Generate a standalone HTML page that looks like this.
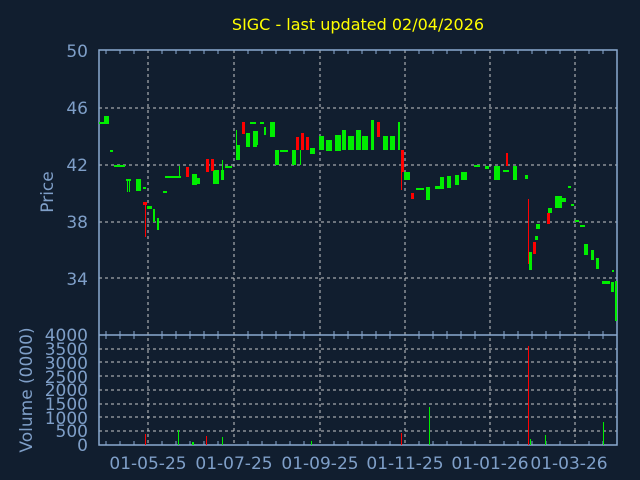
<!DOCTYPE html>
<html><head><meta charset="utf-8"><style>
html,body{margin:0;padding:0;background:#111e2f;width:640px;height:480px;overflow:hidden}
svg{display:block}
text{font-family:"DejaVu Sans","Liberation Sans",sans-serif}
</style></head><body>
<svg width="640" height="480" xmlns="http://www.w3.org/2000/svg">
<rect width="640" height="480" fill="#111e2f"/>
<text x="358" y="30" fill="#ffff00" font-size="16" text-anchor="middle">SIGC - last updated 02/04/2026</text>
<g stroke="#c8c8c8" stroke-width="1" stroke-dasharray="3,3">
<line x1="99" y1="108" x2="617" y2="108"/><line x1="99" y1="165" x2="617" y2="165"/>
<line x1="99" y1="222" x2="617" y2="222"/><line x1="99" y1="278" x2="617" y2="278"/>
<line x1="148" y1="50" x2="148" y2="445"/><line x1="234" y1="50" x2="234" y2="445"/>
<line x1="320" y1="50" x2="320" y2="445"/><line x1="405" y1="50" x2="405" y2="445"/>
<line x1="490" y1="50" x2="490" y2="445"/><line x1="575" y1="50" x2="575" y2="445"/>
<line x1="99" y1="349" x2="617" y2="349"/><line x1="99" y1="362" x2="617" y2="362"/>
<line x1="99" y1="376" x2="617" y2="376"/><line x1="99" y1="390" x2="617" y2="390"/>
<line x1="99" y1="404" x2="617" y2="404"/><line x1="99" y1="417" x2="617" y2="417"/>
<line x1="99" y1="431" x2="617" y2="431"/>
</g>
<g fill="none" stroke="#8aaad0" stroke-width="1.5">
<rect x="99" y="50" width="518" height="395"/>
<line x1="99" y1="335" x2="617" y2="335"/>
</g>
<g stroke="#8aaad0" stroke-width="1">
<path d="M106 50v4M120 50v4M134 50v4M162 50v4M176 50v4M190 50v4M204 50v4M218 50v4M248 50v4M262 50v4M276 50v4M290 50v4M304 50v4M334 50v4M348 50v4M362 50v4M376 50v4M390 50v4M419 50v4M433 50v4M447 50v4M461 50v4M475 50v4M504 50v4M518 50v4M532 50v4M546 50v4M560 50v4M589 50v4M603 50v4"/>
<path d="M106 335v-4M120 335v-4M134 335v-4M162 335v-4M176 335v-4M190 335v-4M204 335v-4M218 335v-4M248 335v-4M262 335v-4M276 335v-4M290 335v-4M304 335v-4M334 335v-4M348 335v-4M362 335v-4M376 335v-4M390 335v-4M419 335v-4M433 335v-4M447 335v-4M461 335v-4M475 335v-4M504 335v-4M518 335v-4M532 335v-4M546 335v-4M560 335v-4M589 335v-4M603 335v-4"/>
<path d="M106 335v4M120 335v4M134 335v4M162 335v4M176 335v4M190 335v4M204 335v4M218 335v4M248 335v4M262 335v4M276 335v4M290 335v4M304 335v4M334 335v4M348 335v4M362 335v4M376 335v4M390 335v4M419 335v4M433 335v4M447 335v4M461 335v4M475 335v4M504 335v4M518 335v4M532 335v4M546 335v4M560 335v4M589 335v4M603 335v4"/>
<path d="M106 445v-4M120 445v-4M134 445v-4M162 445v-4M176 445v-4M190 445v-4M204 445v-4M218 445v-4M248 445v-4M262 445v-4M276 445v-4M290 445v-4M304 445v-4M334 445v-4M348 445v-4M362 445v-4M376 445v-4M390 445v-4M419 445v-4M433 445v-4M447 445v-4M461 445v-4M475 445v-4M504 445v-4M518 445v-4M532 445v-4M546 445v-4M560 445v-4M589 445v-4M603 445v-4"/>
</g>
<g fill="#00ee00">
<rect x="99" y="122" width="5" height="2"/><rect x="104" y="116" width="5" height="8"/>
<rect x="110" y="150" width="3" height="2"/><rect x="114" y="165" width="11" height="2"/>
<rect x="126" y="179" width="5" height="2"/><rect x="127" y="179" width="1" height="13"/><rect x="129" y="179" width="1" height="13"/>
<rect x="136" y="179" width="5" height="12"/><rect x="143" y="187" width="3" height="2"/>
<rect x="147" y="206" width="5" height="3"/><rect x="153" y="209" width="2" height="13"/><rect x="157" y="218" width="2" height="12"/>
<rect x="163" y="191" width="4" height="2"/><rect x="165" y="176" width="16" height="2"/><rect x="179" y="166" width="1" height="12"/>
<rect x="192" y="174" width="5" height="11"/><rect x="197" y="178" width="3" height="6"/>
<rect x="213" y="170" width="6" height="14"/><rect x="221" y="170" width="3" height="10"/><rect x="222" y="160" width="1" height="14"/>
<rect x="225" y="166" width="7" height="2"/><rect x="236" y="145" width="4" height="15"/><rect x="236" y="130" width="1" height="20"/>
<rect x="246" y="133" width="4" height="14"/><rect x="253" y="131" width="4" height="16"/><rect x="257" y="131" width="1" height="14"/>
<rect x="250" y="122" width="6" height="2"/><rect x="260" y="122" width="4" height="2"/><rect x="264" y="127" width="2" height="8"/>
<rect x="270" y="122" width="5" height="15"/><rect x="275" y="150" width="4" height="15"/><rect x="280" y="150" width="8" height="2"/>
<rect x="292" y="150" width="4" height="15"/><rect x="300" y="150" width="1" height="15"/><rect x="310" y="148" width="5" height="6"/>
<rect x="319" y="136" width="5" height="14"/><rect x="326" y="140" width="6" height="11"/><rect x="335" y="135" width="6" height="16"/><rect x="342" y="130" width="4" height="20"/>
<rect x="348" y="136" width="6" height="14"/><rect x="356" y="130" width="5" height="20"/><rect x="362" y="136" width="6" height="14"/>
<rect x="371" y="120" width="3" height="30"/><rect x="383" y="136" width="5" height="14"/><rect x="390" y="136" width="5" height="14"/><rect x="398" y="122" width="2" height="28"/>
<rect x="404" y="172" width="6" height="8"/><rect x="416" y="188" width="8" height="2"/><rect x="426" y="187" width="4" height="13"/>
<rect x="435" y="186" width="5" height="3"/><rect x="440" y="177" width="4" height="12"/><rect x="447" y="176" width="4" height="12"/>
<rect x="455" y="175" width="4" height="10"/><rect x="461" y="172" width="6" height="8"/><rect x="474" y="165" width="6" height="2"/>
<rect x="485" y="166" width="4" height="3"/><rect x="494" y="166" width="6" height="14"/><rect x="503" y="170" width="6" height="2"/>
<rect x="513" y="166" width="4" height="14"/><rect x="525" y="175" width="3" height="4"/>
<rect x="529" y="252" width="3" height="18"/><rect x="535" y="236" width="3" height="4"/><rect x="536" y="224" width="4" height="5"/>
<rect x="548" y="208" width="4" height="5"/><rect x="555" y="196" width="7" height="12"/><rect x="562" y="198" width="4" height="4"/>
<rect x="568" y="186" width="3" height="2"/><rect x="571" y="204" width="3" height="2"/>
<rect x="575" y="220" width="4" height="2"/><rect x="580" y="225" width="5" height="2"/><rect x="584" y="244" width="4" height="11"/>
<rect x="591" y="250" width="3" height="10"/><rect x="596" y="258" width="3" height="11"/><rect x="602" y="281" width="8" height="3"/>
<rect x="611" y="282" width="3" height="10"/><rect x="615" y="281" width="2" height="40"/><rect x="612" y="270" width="2" height="2"/>
</g>
<g fill="#ff0000">
<rect x="145" y="202" width="1" height="35"/><rect x="143" y="202" width="4" height="3"/>
<rect x="186" y="167" width="3" height="10"/><rect x="206" y="159" width="3" height="13"/><rect x="211" y="159" width="3" height="12"/>
<rect x="242" y="122" width="3" height="12"/><rect x="296" y="137" width="3" height="13"/><rect x="301" y="133" width="3" height="17"/><rect x="306" y="137" width="3" height="13"/>
<rect x="377" y="122" width="3" height="15"/><rect x="401" y="150" width="3" height="22"/><rect x="401" y="150" width="1" height="40"/>
<rect x="411" y="193" width="3" height="6"/><rect x="506" y="153" width="2" height="13"/>
<rect x="528" y="199" width="1" height="65"/><rect x="533" y="242" width="3" height="12"/><rect x="547" y="213" width="3" height="11"/>
</g>
<g>
<rect x="145" y="434" width="1" height="11" fill="#ff0000"/>
<rect x="178" y="430" width="1" height="15" fill="#00ee00"/>
<rect x="192" y="442" width="2" height="3" fill="#00ee00"/>
<rect x="206" y="436" width="1" height="9" fill="#ff0000"/>
<rect x="222" y="437" width="1" height="8" fill="#00ee00"/>
<rect x="311" y="441" width="1" height="4" fill="#00ee00"/>
<rect x="401" y="433" width="1" height="12" fill="#ff0000"/>
<rect x="429" y="407" width="1" height="38" fill="#00ee00"/>
<rect x="528" y="346" width="1" height="99" fill="#ff0000"/>
<rect x="530" y="439" width="1" height="6" fill="#00ee00"/>
<rect x="545" y="435" width="1" height="10" fill="#00ee00"/>
<rect x="603" y="422" width="1" height="23" fill="#00ee00"/>
</g>
<g fill="#7f9fc8" font-size="17" text-anchor="end">
<text x="88" y="57">50</text><text x="88" y="114">46</text><text x="88" y="171">42</text>
<text x="88" y="228">38</text><text x="88" y="285">34</text>
</g>
<g fill="#7f9fc8" font-size="17" text-anchor="end">
<text x="88" y="341">4000</text><text x="88" y="355">3500</text><text x="88" y="369">3000</text>
<text x="88" y="383">2500</text><text x="88" y="396">2000</text><text x="88" y="410">1500</text>
<text x="88" y="424">1000</text><text x="88" y="437">500</text><text x="88" y="451">0</text>
</g>
<g fill="#7f9fc8" font-size="17" text-anchor="middle">
<text x="148" y="469">01-05-25</text><text x="234" y="469">01-07-25</text><text x="320" y="469">01-09-25</text>
<text x="405" y="469">01-11-25</text><text x="490" y="469">01-01-26</text><text x="569" y="469">01-03-26</text>
</g>
<text transform="translate(53,192) rotate(-90)" fill="#7f9fc8" font-size="17" text-anchor="middle">Price</text>
<text transform="translate(32,390) rotate(-90)" fill="#7f9fc8" font-size="17" text-anchor="middle">Volume (0000)</text>
</svg>
</body></html>
